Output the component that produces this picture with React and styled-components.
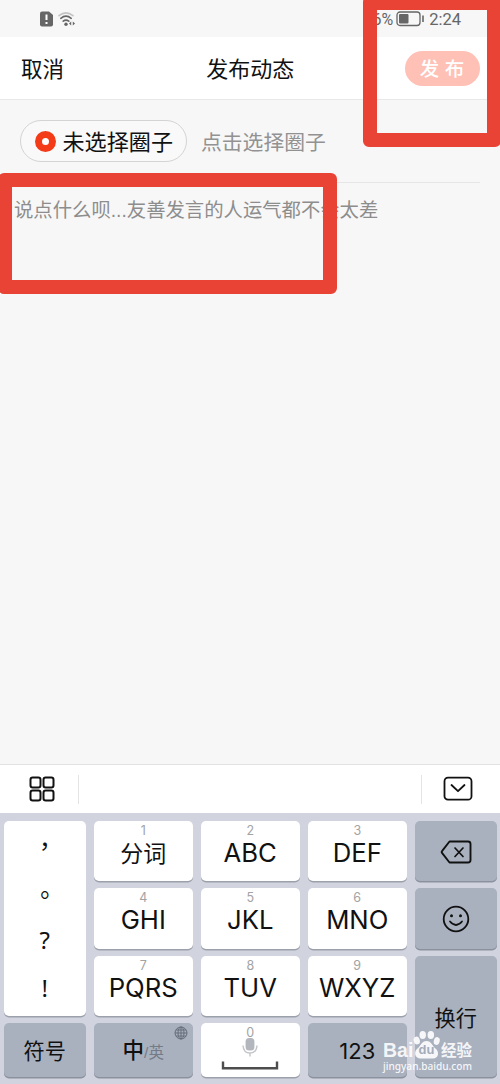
import React from "react";
import styled, { createGlobalStyle } from "styled-components";

const Global = createGlobalStyle`
  * { box-sizing: border-box; }
  body { margin: 0; }
`;

const Screen = styled.div`
  position: relative;
  width: 500px;
  height: 1084px;
  overflow: hidden;
  display: flex;
  flex-direction: column;
  background: #f7f7f7;
  color: #111;
  font-family: "Liberation Sans", "Noto Sans CJK SC", sans-serif;
  white-space: nowrap;
`;

const StatusBar = styled.div`
  height: 37px;
  padding: 1px 39px 0 40px;
  display: flex;
  align-items: center;
  justify-content: space-between;
  color: #666;
  font: 16.5px/20px Roboto, "Noto Sans CJK SC", sans-serif;
`;

const StatusGroup = styled.div`
  display: flex;
  align-items: center;
  gap: ${(p) => p.$gap}px;
`;

const Percent = styled.span`
  font-size: 16px;
  padding-top: 2px;
`;

const Clock = styled.span`
  padding-left: 1px;
  padding-top: 2px;
`;

const Header = styled.header`
  height: 63px;
  padding: 0 20.5px 0 21px;
  display: grid;
  grid-template-columns: 1fr auto 1fr;
  align-items: center;
  background: #fff;
  border-bottom: 1.5px solid #e8e8e8;
`;

const Cancel = styled.span`
  font-size: 21.5px;
  line-height: 30px;
  padding-top: 4px;
`;

const Title = styled.h1`
  margin: 0;
  font-size: 22px;
  font-weight: 400;
  line-height: 30px;
  padding-top: 4px;
`;

const Publish = styled.button`
  justify-self: end;
  width: 75px;
  height: 35px;
  padding: 1px 0 0;
  border: 0;
  border-radius: 18px;
  background: #ffc0b6;
  color: #fff;
  font: 500 19.5px/34px "Liberation Sans", "Noto Sans CJK SC", sans-serif;
`;

const Composer = styled.main`
  height: 664px;
  padding-top: 20px;
`;

const CircleRow = styled.div`
  height: 63px;
  margin: 0 20px;
  display: flex;
  align-items: flex-start;
  gap: 14px;
  border-bottom: 1.5px solid #e6e6e6;
`;

const CirclePill = styled.div`
  width: 167px;
  height: 42px;
  padding: 0 0 0 14px;
  display: flex;
  align-items: center;
  gap: 7px;
  border: 1px solid #d4d4d4;
  border-radius: 21px;
  background: #f9f9f9;
  font-size: 22.1px;
  line-height: 40px;
`;

const PillLabel = styled.span`
  padding-top: 3px;
`;

const Dot = styled.i`
  width: 21px;
  height: 21px;
  margin-left: -0.5px;
  border: 7px solid #f33b18;
  border-radius: 50%;
  background: #fff;
`;

const CircleHint = styled.span`
  color: #929292;
  font-size: 20.8px;
  line-height: 45px;
`;

const Placeholder = styled.p`
  margin: 13px 14px;
  color: #8d8d8d;
  font-size: 19.35px;
  line-height: 28px;
`;

const Toolbar = styled.div`
  height: 49px;
  display: grid;
  grid-template-columns: 78px 1fr 78px;
  align-items: center;
  background: #fff;
  border-top: 1.5px solid #e2e2e2;
`;

const ToolSlot = styled.div`
  display: flex;
  justify-content: flex-end;
  padding-right: ${(p) => p.$right}px;
`;

const Candidates = styled.div`
  height: 29px;
  border: solid #e4e4e4;
  border-width: 0 1px;
`;

const Keyboard = styled.div`
  height: 271px;
  padding: 8px 3.5px 0 4px;
  display: grid;
  grid-template-columns: 81.5px repeat(3, 98.5px) 81.5px;
  grid-template-rows: repeat(3, 60.3px) 54.5px;
  gap: 7px 8.5px;
  background: #d1d4de;
`;

const Key = styled.div`
  grid-column: ${(p) => p.$col};
  grid-row: ${(p) => p.$row};
  position: relative;
  display: flex;
  flex-direction: column;
  align-items: center;
  justify-content: ${(p) => (p.$center ? "center" : "flex-start")};
  padding-top: ${(p) => p.$top || 0}px;
  border-radius: 5px;
  background: ${(p) => (p.$dark ? "#a9b1bf" : "#fff")};
  box-shadow: 0 1.5px 0 ${(p) => (p.$dark ? "#8b919e" : "#9ca0aa")};
`;

const Digit = styled.span`
  color: #a3a3a3;
  font: 400 12.5px/14px Inter, sans-serif;
  padding-top: 3px;
`;

const Letters = styled.span`
  font-family: Inter, "Noto Sans CJK SC", sans-serif;
  font-weight: 400;
  font-size: ${(p) => (p.$cjk ? 23 : 25.7)}px;
  line-height: 30px;
  padding-top: ${(p) => (p.$cjk ? 1 : 0)}px;
`;

const Word = styled.span`
  font-family: Inter, "Noto Sans CJK SC", sans-serif;
  font-size: ${(p) => p.$size || 21.2}px;
  font-weight: 400;
  line-height: 30px;
  padding-top: ${(p) => (p.$size ? 1 : 2)}px;
`;

const Punctuation = styled.span`
  height: 48.7px;
  display: flex;
  align-items: center;
  font: 24px/30px ${(p) => (p.$wide ? '"Noto Sans CJK TC"' : '"Noto Sans"')}, sans-serif;
  padding-bottom: ${(p) => (p.$wide ? 1 : 6)}px;
`;

const Language = styled.div`
  display: flex;
  align-items: baseline;
  font-size: 21.5px;
  font-weight: 500;
  line-height: 30px;
  padding-top: 4px;
`;

const English = styled.small`
  color: #747b87;
  font-size: 15.5px;
  font-weight: 400;
`;

const GlobeCorner = styled.div`
  position: absolute;
  top: 3px;
  right: 5px;
  line-height: 0;
`;

const Highlight = styled.div`
  position: absolute;
  left: ${(p) => p.$x}px;
  top: ${(p) => p.$y}px;
  width: ${(p) => p.$w}px;
  height: ${(p) => p.$h}px;
  border: 14px solid #e94335;
  border-radius: 6px;
`;

const Watermark = styled.div`
  position: absolute;
  left: 383px;
  top: 1030px;
  width: 92px;
  color: rgba(255, 255, 255, 0.9);
`;

const Brand = styled.div`
  display: flex;
  align-items: flex-end;
  height: 30px;
  font-weight: 700;
  line-height: 22px;
`;

const BrandLatin = styled.span`
  width: 30px;
  font-size: 19.5px;
  line-height: 20px;
`;

const BrandPaw = styled.span`
  width: 27px;
  height: 30px;
  display: grid;
  line-height: 0;
  > * { grid-area: 1 / 1; }
`;

const PawText = styled.span`
  place-self: end center;
  padding-bottom: 4px;
  color: #a4acba;
  font-size: 13px;
  line-height: 13px;
`;

const BrandCjk = styled.span`
  padding-left: 1px;
  font-size: 15.5px;
  line-height: 18px;
`;

const Site = styled.div`
  font: 500 10.1px/13px "Noto Sans", sans-serif;
`;

const stroke = { fill: "none", stroke: "#111", strokeLinecap: "round", strokeLinejoin: "round" };

const AlertIcon = () => (
  <svg width="13" height="16" viewBox="0 0 13 16">
    <path d="M2 0.5H9L13 4V13.5Q13 15.5 11 15.5H2Q0 15.5 0 13.5V2.5Q0 .5 2 .5Z" fill="#666" />
    <path d="M6.5 3.5V9M6.5 11V13" stroke="#fff" strokeWidth="2" />
  </svg>
);

const WifiIcon = () => (
  <svg width="18" height="16" viewBox="0 0 18 16" fill="none" strokeWidth="1.6" strokeLinecap="round">
    <path d="M1 4.7Q8 -1 15 4.7" stroke="#c4c4c4" />
    <path d="M2.8 7.3Q8 3 13.2 7.3M5.2 10.2Q8 7.9 10.8 10.2" stroke="#666" />
    <circle cx="8" cy="13.2" r="1.7" fill="#666" />
    <path d="M13.2 10.5L11 12.5L13.2 14.5ZM14.8 10.5L17 12.5L14.8 14.5Z" fill="#666" />
  </svg>
);

const BatteryIcon = () => (
  <svg width="29" height="16" viewBox="0 0 29 16">
    <rect x="1" y="1" width="23" height="13.5" rx="3" fill="none" stroke="#666" strokeWidth="1.3" />
    <rect x="3" y="3" width="9.5" height="9.5" rx="1" fill="#666" />
    <path d="M27 4.5V11" stroke="#666" strokeWidth="1.6" />
  </svg>
);

const GridIcon = () => (
  <svg width="26" height="26" viewBox="0 0 26 26" {...stroke} strokeWidth="2">
    {[[1.5, 1.5], [14.5, 1.5], [1.5, 14.5], [14.5, 14.5]].map(([x, y]) => (
      <rect key={`${x}-${y}`} x={x} y={y} width="10" height="10" rx="2.2" />
    ))}
  </svg>
);

const CollapseIcon = () => (
  <svg width="30" height="26" viewBox="0 0 30 26" {...stroke} strokeWidth="1.8">
    <rect x="1.5" y="1.7" width="27" height="22" rx="3.5" />
    <path d="M8.5 9L15 15.2L21.5 9" />
  </svg>
);

const DeleteIcon = () => (
  <svg width="32" height="24" viewBox="0 0 32 24" {...stroke} strokeWidth="1.9">
    <path d="M9.5 1.5H28Q30.5 1.5 30.5 4V20Q30.5 22.5 28 22.5H9.5L2.2 13.2Q1.2 12 2.2 10.8Z" />
    <path d="M15 8L23 16.5M23 8L15 16.5" strokeWidth="1.7" />
  </svg>
);

const SmileIcon = () => (
  <svg width="28" height="28" viewBox="0 0 28 28" {...stroke} strokeWidth="1.8">
    <circle cx="14" cy="14" r="12.3" />
    <path d="M8 16.5Q14 23.5 20 16.5" />
    <circle cx="9.5" cy="10.7" r="1.5" fill="#111" stroke="none" />
    <circle cx="18.5" cy="10.7" r="1.5" fill="#111" stroke="none" />
  </svg>
);

const GlobeIcon = () => (
  <svg width="14" height="14" viewBox="0 0 14 14" fill="none" stroke="#666d79" strokeWidth="1">
    <circle cx="7" cy="7" r="6" />
    <ellipse cx="7" cy="7" rx="3" ry="6" />
    <path d="M1 7H13M7 1V13M2 4H12M2 10H12" />
  </svg>
);

const SpaceIcon = () => (
  <svg width="58" height="35" viewBox="0 0 58 35" fill="none" overflow="visible">
    <rect x="24.6" y="-2" width="8.8" height="12.5" rx="3.5" fill="#b3b6bd" />
    <path d="M22 5.5Q22.5 13 29 13Q35.5 13 36 5.5M29 13V16.5" stroke="#c3c5ca" strokeWidth="1.4" />
    <path d="M2 21.5V28.2H56V21.5" stroke="#4d4d4d" strokeWidth="2.4" />
  </svg>
);

const PawIcon = () => (
  <svg width="27" height="30" viewBox="0 0 25 30" preserveAspectRatio="none" fill="currentColor">
    <ellipse cx="3.5" cy="10.5" rx="2.8" ry="4" transform="rotate(-15 3.5 10.5)" />
    <ellipse cx="9" cy="5" rx="3" ry="4.1" />
    <ellipse cx="16.5" cy="5" rx="3" ry="4.1" />
    <ellipse cx="22" cy="11" rx="2.7" ry="3.9" transform="rotate(15 22 11)" />
    <path d="M12.5 11C8 11 7.2 16 4.2 18.5C.5 21.6 1.5 28.5 7 28.5H18.5C24 28.5 24.5 21.6 20.8 18.5C17.8 16 17 11 12.5 11Z" />
  </svg>
);

const letterKeys = [
  ["1", "分词"], ["2", "ABC"], ["3", "DEF"],
  ["4", "GHI"], ["5", "JKL"], ["6", "MNO"],
  ["7", "PQRS"], ["8", "TUV"], ["9", "WXYZ"],
];

export default function App() {
  return (
    <Screen>
      <Global />
      <StatusBar>
        <StatusGroup $gap={5}><AlertIcon /><WifiIcon /></StatusGroup>
        <StatusGroup $gap={3}><Percent>6%</Percent><BatteryIcon /><Clock>2:24</Clock></StatusGroup>
      </StatusBar>
      <Header>
        <Cancel>取消</Cancel>
        <Title>发布动态</Title>
        <Publish>发 布</Publish>
      </Header>
      <Composer>
        <CircleRow>
          <CirclePill><Dot /><PillLabel>未选择圈子</PillLabel></CirclePill>
          <CircleHint>点击选择圈子</CircleHint>
        </CircleRow>
        <Placeholder>说点什么呗...友善发言的人运气都不会太差</Placeholder>
      </Composer>
      <Toolbar>
        <ToolSlot $right={23}><GridIcon /></ToolSlot>
        <Candidates />
        <ToolSlot $right={27.5}><CollapseIcon /></ToolSlot>
      </Toolbar>
      <Keyboard>
        <Key $col="1" $row="1 / 4">
          <Punctuation $wide>，</Punctuation>
          <Punctuation $wide>。</Punctuation>
          <Punctuation>?</Punctuation>
          <Punctuation>!</Punctuation>
        </Key>
        {letterKeys.map(([digit, label], i) => (
          <Key key={digit} $col={(i % 3) + 2} $row={Math.floor(i / 3) + 1}>
            <Digit>{digit}</Digit>
            <Letters $cjk={i === 0}>{label}</Letters>
          </Key>
        ))}
        <Key $dark $center $col="5" $row="1" $top={1}><DeleteIcon /></Key>
        <Key $dark $center $col="5" $row="2" $top={1}><SmileIcon /></Key>
        <Key $dark $col="5" $row="3 / 5" $top={45}><Word>换行</Word></Key>
        <Key $dark $center $col="1" $row="4"><Word>符号</Word></Key>
        <Key $dark $center $col="2" $row="4">
          <Language>中<English>/英</English></Language>
          <GlobeCorner><GlobeIcon /></GlobeCorner>
        </Key>
        <Key $col="3" $row="4"><Digit>0</Digit><SpaceIcon /></Key>
        <Key $dark $center $col="4" $row="4"><Word $size={22}>123</Word></Key>
      </Keyboard>
      <Highlight $x={363} $y={-4} $w={138} $h={151} />
      <Highlight $x={-2} $y={173} $w={339} $h={121} />
      <Watermark>
        <Brand>
          <BrandLatin>Bai</BrandLatin>
          <BrandPaw><PawIcon /><PawText>du</PawText></BrandPaw>
          <BrandCjk>经验</BrandCjk>
        </Brand>
        <Site>jingyan.baidu.com</Site>
      </Watermark>
    </Screen>
  );
}
